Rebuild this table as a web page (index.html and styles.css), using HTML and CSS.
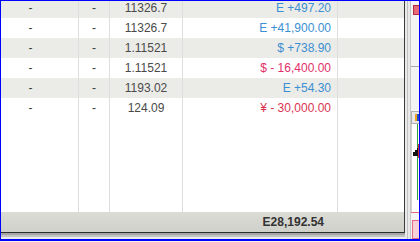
FILE: index.html
```
<!DOCTYPE html>
<html>
<head>
<meta charset="utf-8">
<link rel="stylesheet" href="styles.css">
</head>
<body>
<div class="frame">
  <div class="left">
    <div class="grid">
      <div class="rows">
        <div class="c c1 alt">-</div><div class="c c2 alt">-</div><div class="c c3 alt">11326.7</div><div class="c c4 alt pos">E +497.20</div><div class="c c5 alt"></div>
        <div class="c c1">-</div><div class="c c2">-</div><div class="c c3">11326.7</div><div class="c c4 pos">E +41,900.00</div><div class="c c5"></div>
        <div class="c c1 alt">-</div><div class="c c2 alt">-</div><div class="c c3 alt">1.11521</div><div class="c c4 alt pos">$ +738.90</div><div class="c c5 alt"></div>
        <div class="c c1">-</div><div class="c c2">-</div><div class="c c3">1.11521</div><div class="c c4 neg">$ - 16,400.00</div><div class="c c5"></div>
        <div class="c c1 alt">-</div><div class="c c2 alt">-</div><div class="c c3 alt">1193.02</div><div class="c c4 alt pos">E +54.30</div><div class="c c5 alt"></div>
        <div class="c c1">-</div><div class="c c2">-</div><div class="c c3">124.09</div><div class="c c4 neg2">¥ - 30,000.00</div><div class="c c5"></div>
        <div class="c c1"></div><div class="c c2"></div><div class="c c3"></div><div class="c c4"></div><div class="c c5"></div>
      </div>
      <div class="footer"><span class="total">E28,192.54</span></div>
    </div>
    <div class="bands"></div>
  </div>
  <div class="gutter"><div class="gline"></div></div>
  <div class="panel">
    <div class="ptop"><div class="redbox"></div></div>
    <div class="pmid"></div>
    <div class="ptab"><span class="tabicon"></span></div>
    <div class="pchart">
      <div class="greenline"></div>
      <div class="bars"><span class="b1"></span><span class="b2"></span><span class="b3"></span></div>
      <div class="redline"></div>
    </div>
    <div class="pinkline"></div>
    <div class="pgap"></div>
    <div class="pinkbox"></div>
  </div>
</div>
</body>
</html>
```

FILE: styles.css
```
html, body {
  margin: 0;
  padding: 0;
  background: #f2f2f2;
}
body {
  width: 420px;
  height: 242px;
  overflow: hidden;
  font-family: "Liberation Sans", Arial, sans-serif;
  font-size: 12px;
}
.frame {
  box-sizing: border-box;
  width: 420px;
  height: 241px;
  border-top: 1px solid #0000ff;
  border-left: 1px solid #0000ff;
  border-right: 1px solid #0000ff;
  border-bottom: 2px solid #0000ff;
  display: flex;
  overflow: hidden;
  background: #f0f0f0;
}
.left {
  width: 404px;
  display: flex;
  flex-direction: column;
}
.grid {
  flex: 1;
  display: flex;
  flex-direction: column;
  border-right: 1px solid #3c3c3c;
  border-bottom: 1px solid #2e2e2e;
  background: #fff;
  overflow: hidden;
}
.rows {
  flex: 1;
  margin-top: -3px;
  display: grid;
  grid-template-columns: 78px 31px 73px 155px 66px;
  grid-template-rows: repeat(6, 20px) 1fr;
}
.c {
  box-sizing: border-box;
  border-right: 1px solid #dedede;
  line-height: 20px;
  white-space: nowrap;
  color: #3a3a3a;
  background: #fff;
}
.c5 { border-right: none; }
.alt { background: #ebebe7; }
.c1 { text-align: center; padding-right: 18px; }
.c2 { text-align: center; }
.c3 { text-align: center; color: #4a4a4a; }
.c4 { text-align: right; padding-right: 6px; }
.pos { color: #3b8fd2; }
.neg { color: #e2306a; }
.neg2 { color: #d93450; }
.footer {
  height: 20px;
  background: linear-gradient(#dcdcd7, #d0d0cb);
  display: flex;
  justify-content: flex-end;
  align-items: center;
  padding-right: 80px;
}
.total {
  font-weight: bold;
  color: #333;
  font-size: 12px;
}
.bands {
  height: 6px;
  background: linear-gradient(#a6a6a6 0, #a6a6a6 2px, #c4c4c4 2px, #c4c4c4 4px, #ececec 4px);
}
.gutter {
  width: 7px;
  background: #e9e9e9;
  display: flex;
  justify-content: center;
  border-right: 1px solid #c6c6c6;
}
.gline {
  width: 1px;
  background: #c2c2c2;
  margin-right: 1px;
}
.panel {
  flex: 1;
  display: flex;
  flex-direction: column;
  background: #f4f4f4;
}
.ptop {
  height: 66px;
  border-bottom: 1px solid #a8a8a8;
  padding: 4px 0 0 2px;
  box-sizing: border-box;
}
.redbox {
  width: 5px;
  height: 8px;
  background: #e86a78;
  border: 1px solid #b03040;
  border-right: none;
}
.pmid {
  height: 44px;
}
.ptab {
  height: 11px;
  border: 1px solid #b0b0b0;
  border-right: none;
  background: #e6e6e6;
  display: flex;
  align-items: center;
  justify-content: flex-end;
}
.tabicon {
  width: 2px;
  height: 7px;
  background: #2050c0;
  border-left: 2px solid #f0a020;
}
.pchart {
  height: 88px;
  position: relative;
  background: #fff;
  border-left: 1px solid #d0d0d0;
}
.greenline {
  position: absolute;
  right: 1px;
  top: 0;
  width: 1px;
  height: 76px;
  background: #30a040;
}
.redline {
  position: absolute;
  right: 0;
  top: 20px;
  width: 1px;
  height: 14px;
  background: #d03030;
}
.bars {
  position: absolute;
  left: 1px;
  top: 24px;
  display: flex;
  align-items: flex-end;
  gap: 0;
  height: 8px;
}
.bars span {
  width: 1px;
  background: #111;
  border-right: 1px solid #111;
}
.b1 { height: 4px; }
.b2 { height: 6px; }
.b3 { height: 8px; }
.pinkline {
  height: 1px;
  background: #e07080;
}
.pgap {
  height: 7px;
}
.pinkbox {
  flex: 1;
  background: #f8d0d8;
  border: 1px solid #e07080;
  border-right: none;
  margin-left: 1px;
}
```
